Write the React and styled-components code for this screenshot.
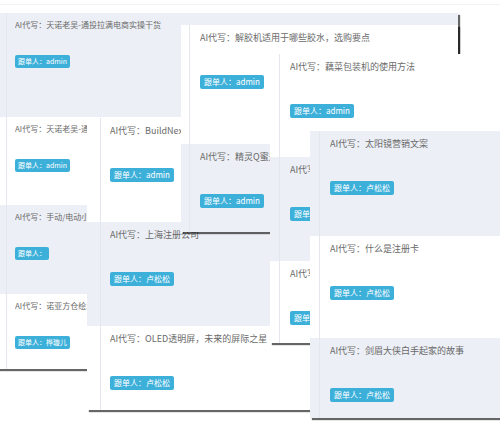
import React from 'react';
import styled, { createGlobalStyle, css } from 'styled-components';

const Global = createGlobalStyle`
  html, body { margin: 0; padding: 0; background: #fff; }
  body { font-family: "Noto Sans CJK SC", "Noto Sans", sans-serif; }
`;

const Desktop = styled.div`
  position: relative;
  width: 500px;
  height: 424px;
  overflow: hidden;
  background: #fff;

  &::before {
    content: '';
    position: absolute;
    left: 0;
    right: 0;
    top: 4px;
    height: 1px;
    background: #f1f2f5;
  }
`;

// each panel is a loose "window" on the canvas, so it is placed by its coords
const Panel = styled.div`
  position: absolute;
  left: ${p => p.$x}px;
  top: ${p => p.$y}px;
  width: ${p => p.$w}px;
  z-index: ${p => p.$z};
  display: flex;
  flex-direction: column;
  background: #fff;
  box-shadow: 2px 2px 1px rgba(0, 0, 0, 0.6);

  &::after {
    content: '';
    position: absolute;
    top: 0;
    bottom: 0;
    left: ${p => p.$rail}px;
    width: 1px;
    background: #e4e7ee;
  }
`;

const Row = styled.div`
  height: ${p => p.$h}px;
  box-sizing: border-box;
  padding-left: ${p => p.$pad}px;
  padding-top: 7px;
  background: ${p => (p.$alt ? '#eceff5' : '#fff')};
  overflow: hidden;
  white-space: nowrap;
`;

// the part of a row that is not hidden under the next panel
const Body = styled.div`
  display: flex;
  flex-direction: column;
  align-items: flex-start;
  max-width: ${p => (p.$cut ? `${p.$cut}px` : 'none')};
  overflow: hidden;
`;

const Title = styled.div`
  color: #6a6a6a;
  font-size: ${p => (p.$small ? 8 : 9)}px;
  line-height: ${p => (p.$small ? 10 : 12)}px;
`;

const badgeSmall = css`
  font-size: 7px;
  height: 13px;
  line-height: 13px;
  padding: 0 3px;
  margin-top: 25px;
`;

const Badge = styled.span`
  display: inline-block;
  background: #3db0da;
  color: #fff;
  border-radius: 2px;
  font-size: 8px;
  height: 14px;
  line-height: 14px;
  padding: 0 4px;
  margin-top: 31px;
  ${p => p.$small && badgeSmall}
`;

const panels = [
  {
    id: 'a', x: -3, y: 13, w: 461, z: 1, rail: 9, pad: 18, small: true,
    rows: [
      { h: 104, alt: true, t: 'AI代写：天诺老吴-通投拉满电商实操干货', who: 'admin' },
      { h: 88, t: 'AI代写：天诺老吴-通投拉满电商实操干货', who: 'admin', cut: 72 },
      { h: 89, alt: true, t: 'AI代写：手动/电动小型打包机', who: '', cut: 72 },
      { h: 75, t: 'AI代写：诺亚方仓绘本馆', who: '桦璇儿', cut: 72 },
    ],
  },
  {
    id: 'd', x: 87, y: 118, w: 240, z: 2, rail: 13, pad: 23,
    rows: [
      { h: 104, t: 'AI代写：BuildNext', who: 'admin', cut: 71 },
      { h: 104, alt: true, t: 'AI代写：上海注册公司', who: '卢松松' },
      { h: 84, t: 'AI代写：OLED透明屏，未来的屏际之星', who: '卢松松', cut: 160 },
    ],
  },
  {
    id: 'b', x: 181, y: 25, w: 277, z: 3, rail: 8, pad: 19,
    rows: [
      { h: 119, t: 'AI代写：解胶机适用于哪些胶水，选购要点', who: 'admin' },
      { h: 88, alt: true, t: 'AI代写：精灵Q蜜是什么', who: 'admin', cut: 70 },
    ],
  },
  {
    id: 'c', x: 270, y: 54, w: 230, z: 4, rail: 9, pad: 20,
    rows: [
      { h: 103, t: 'AI代写：藕菜包装机的使用方法', who: 'admin' },
      { h: 104, alt: true, t: 'AI代写：智能锁怎么选', who: 'admin', cut: 20 },
      { h: 82, t: 'AI代写：什么是注册卡', who: '卢松松', cut: 20 },
    ],
  },
  {
    id: 'f', x: 310, y: 131, w: 192, z: 5, rail: 9, pad: 20,
    rows: [
      { h: 105, alt: true, t: 'AI代写：太阳镜营销文案', who: '卢松松' },
      { h: 102, t: 'AI代写：什么是注册卡', who: '卢松松' },
      { h: 80, alt: true, t: 'AI代写：剑眉大侠白手起家的故事', who: '卢松松' },
    ],
  },
];

export default function App() {
  return (
    <>
      <Global />
      <Desktop>
        {panels.map(p => (
          <Panel key={p.id} $x={p.x} $y={p.y} $w={p.w} $z={p.z} $rail={p.rail}>
            {p.rows.map((r, i) => (
              <Row key={i} $h={r.h} $alt={r.alt} $pad={p.pad}>
                <Body $cut={r.cut}>
                  <Title $small={p.small}>{r.t}</Title>
                  <Badge $small={p.small}>跟单人：{r.who}</Badge>
                </Body>
              </Row>
            ))}
          </Panel>
        ))}
      </Desktop>
    </>
  );
}
